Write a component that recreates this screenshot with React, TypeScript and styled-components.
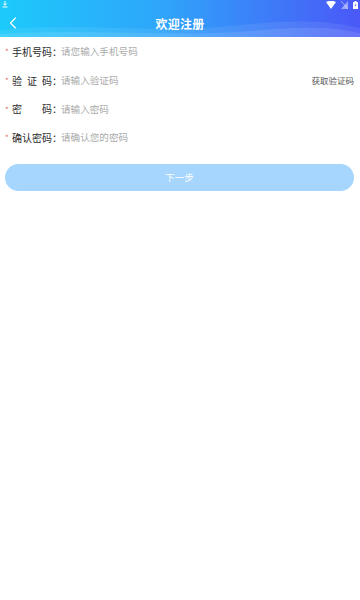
import React from 'react'
import styled, { createGlobalStyle } from 'styled-components'

const GlobalStyle = createGlobalStyle`
  html, body {
    margin: 0;
    padding: 0;
    background: #fff;
    font-family: "Noto Sans CJK SC", "Noto Sans", sans-serif;
  }
`

const Page = styled.div`
  width: 360px;
  min-height: 600px;
  background: #fff;
  display: flex;
  flex-direction: column;
`

const Header = styled.header`
  position: relative;
  height: 37px;
  background: linear-gradient(90deg, #1ccafb 0%, #2fa5fa 45%, #4a58f7 100%);
  overflow: hidden;
  display: flex;
  align-items: center;
  justify-content: center;
`

const Waves = styled.svg`
  position: absolute;
  left: 0;
  top: 0;
  width: 360px;
  height: 37px;
`

const StatusBar = styled.div`
  position: absolute;
  top: 0;
  left: 0;
  right: 0;
  height: 9px;
  display: flex;
  align-items: center;
  justify-content: space-between;
  padding: 0 2px;
`

const StatusIcons = styled.div`
  display: flex;
  align-items: center;
  gap: 5px;
`

const BackButton = styled.div`
  position: absolute;
  left: 9px;
  top: 16px;
  width: 10px;
  height: 14px;
  display: flex;
  align-items: center;
`

const Title = styled.h1`
  position: relative;
  margin: 9px 0 0;
  font-size: 12px;
  font-weight: 600;
  color: #fff;
  letter-spacing: 0.3px;
`

const Form = styled.div`
  display: flex;
  flex-direction: column;
`

const Row = styled.div`
  height: 28.7px;
  display: flex;
  align-items: center;
  padding: 0 6px 0 5px;
`

const Star = styled.span`
  width: 7px;
  color: #e86a62;
  font-size: 8px;
  line-height: 1;
  margin-top: 2px;
`

const LabelText = styled.span`
  width: 40px;
  font-size: 10px;
  color: #2b2b2b;
  font-weight: 400;
  text-align: justify;
  text-align-last: justify;
`

const Colon = styled.span`
  width: 9px;
  font-size: 10px;
  color: #2b2b2b;
`

const Input = styled.span`
  flex: 1;
  font-size: 9.6px;
  color: #aaa;
`

const CodeLink = styled.span`
  font-size: 8.5px;
  color: #555;
`

const NextButton = styled.div`
  margin: 12px 6px 0 5px;
  height: 27px;
  border-radius: 14px;
  background: #a6d5fd;
  color: #fff;
  font-size: 9.6px;
  display: flex;
  align-items: center;
  justify-content: center;
`

const fields = [
  { label: '手机号码', placeholder: '请您输入手机号码', code: false },
  { label: '验证码', placeholder: '请输入验证码', code: true },
  { label: '密码', placeholder: '请输入密码', code: false },
  { label: '确认密码', placeholder: '请确认您的密码', code: false },
]

export default function App() {
  return (
    <Page>
      <GlobalStyle />
      <Header>
        <Waves viewBox="0 0 360 37" preserveAspectRatio="none">
          <path d="M0 30 C 80 22, 150 34, 230 26 S 330 22, 360 28 L360 37 L0 37 Z" fill="#ffffff" opacity="0.08" />
          <path d="M0 34 C 90 28, 170 38, 250 31 S 340 30, 360 33 L360 37 L0 37 Z" fill="#ffffff" opacity="0.1" />
        </Waves>
        <StatusBar>
          <svg width="6" height="7" viewBox="0 0 6 7">
            <path d="M3 0 V4 M1.3 2.6 L3 4.3 L4.7 2.6" stroke="#fff" strokeWidth="1" fill="none" />
            <rect x="0.5" y="5.5" width="5" height="1" fill="#fff" />
          </svg>
          <StatusIcons>
            <svg width="10" height="8" viewBox="0 0 10 8">
              <path d="M0 1 Q5 -1.5 10 1 L5 8 Z" fill="#fff" />
            </svg>
            <svg width="7" height="8" viewBox="0 0 7 8">
              <path d="M7 0 L7 8 L0 8 Z" fill="#fff" opacity="0.45" />
              <path d="M0 0 L7 8" stroke="#fff" strokeWidth="0.8" opacity="0.6" />
            </svg>
            <svg width="5" height="8" viewBox="0 0 5 8">
              <rect x="1.5" y="0" width="2" height="1" fill="#fff" />
              <rect x="0" y="1" width="5" height="7" rx="0.5" fill="#fff" />
              <path d="M2.7 2 L1.6 4.6 H2.6 L2.2 6.6 L3.4 3.8 H2.4 Z" fill="#4a58f7" />
            </svg>
          </StatusIcons>
        </StatusBar>
        <BackButton>
          <svg width="8" height="12" viewBox="0 0 8 12">
            <path d="M6.5 1 L1.5 6 L6.5 11" stroke="#fff" strokeWidth="1.1" fill="none" strokeLinecap="round" strokeLinejoin="round" />
          </svg>
        </BackButton>
        <Title>欢迎注册</Title>
      </Header>
      <Form>
        {fields.map(f => (
          <Row key={f.label}>
            <Star>*</Star>
            <LabelText>{f.label}</LabelText>
            <Colon>：</Colon>
            <Input>{f.placeholder}</Input>
            {f.code && <CodeLink>获取验证码</CodeLink>}
          </Row>
        ))}
      </Form>
      <NextButton>下一步</NextButton>
    </Page>
  )
}
